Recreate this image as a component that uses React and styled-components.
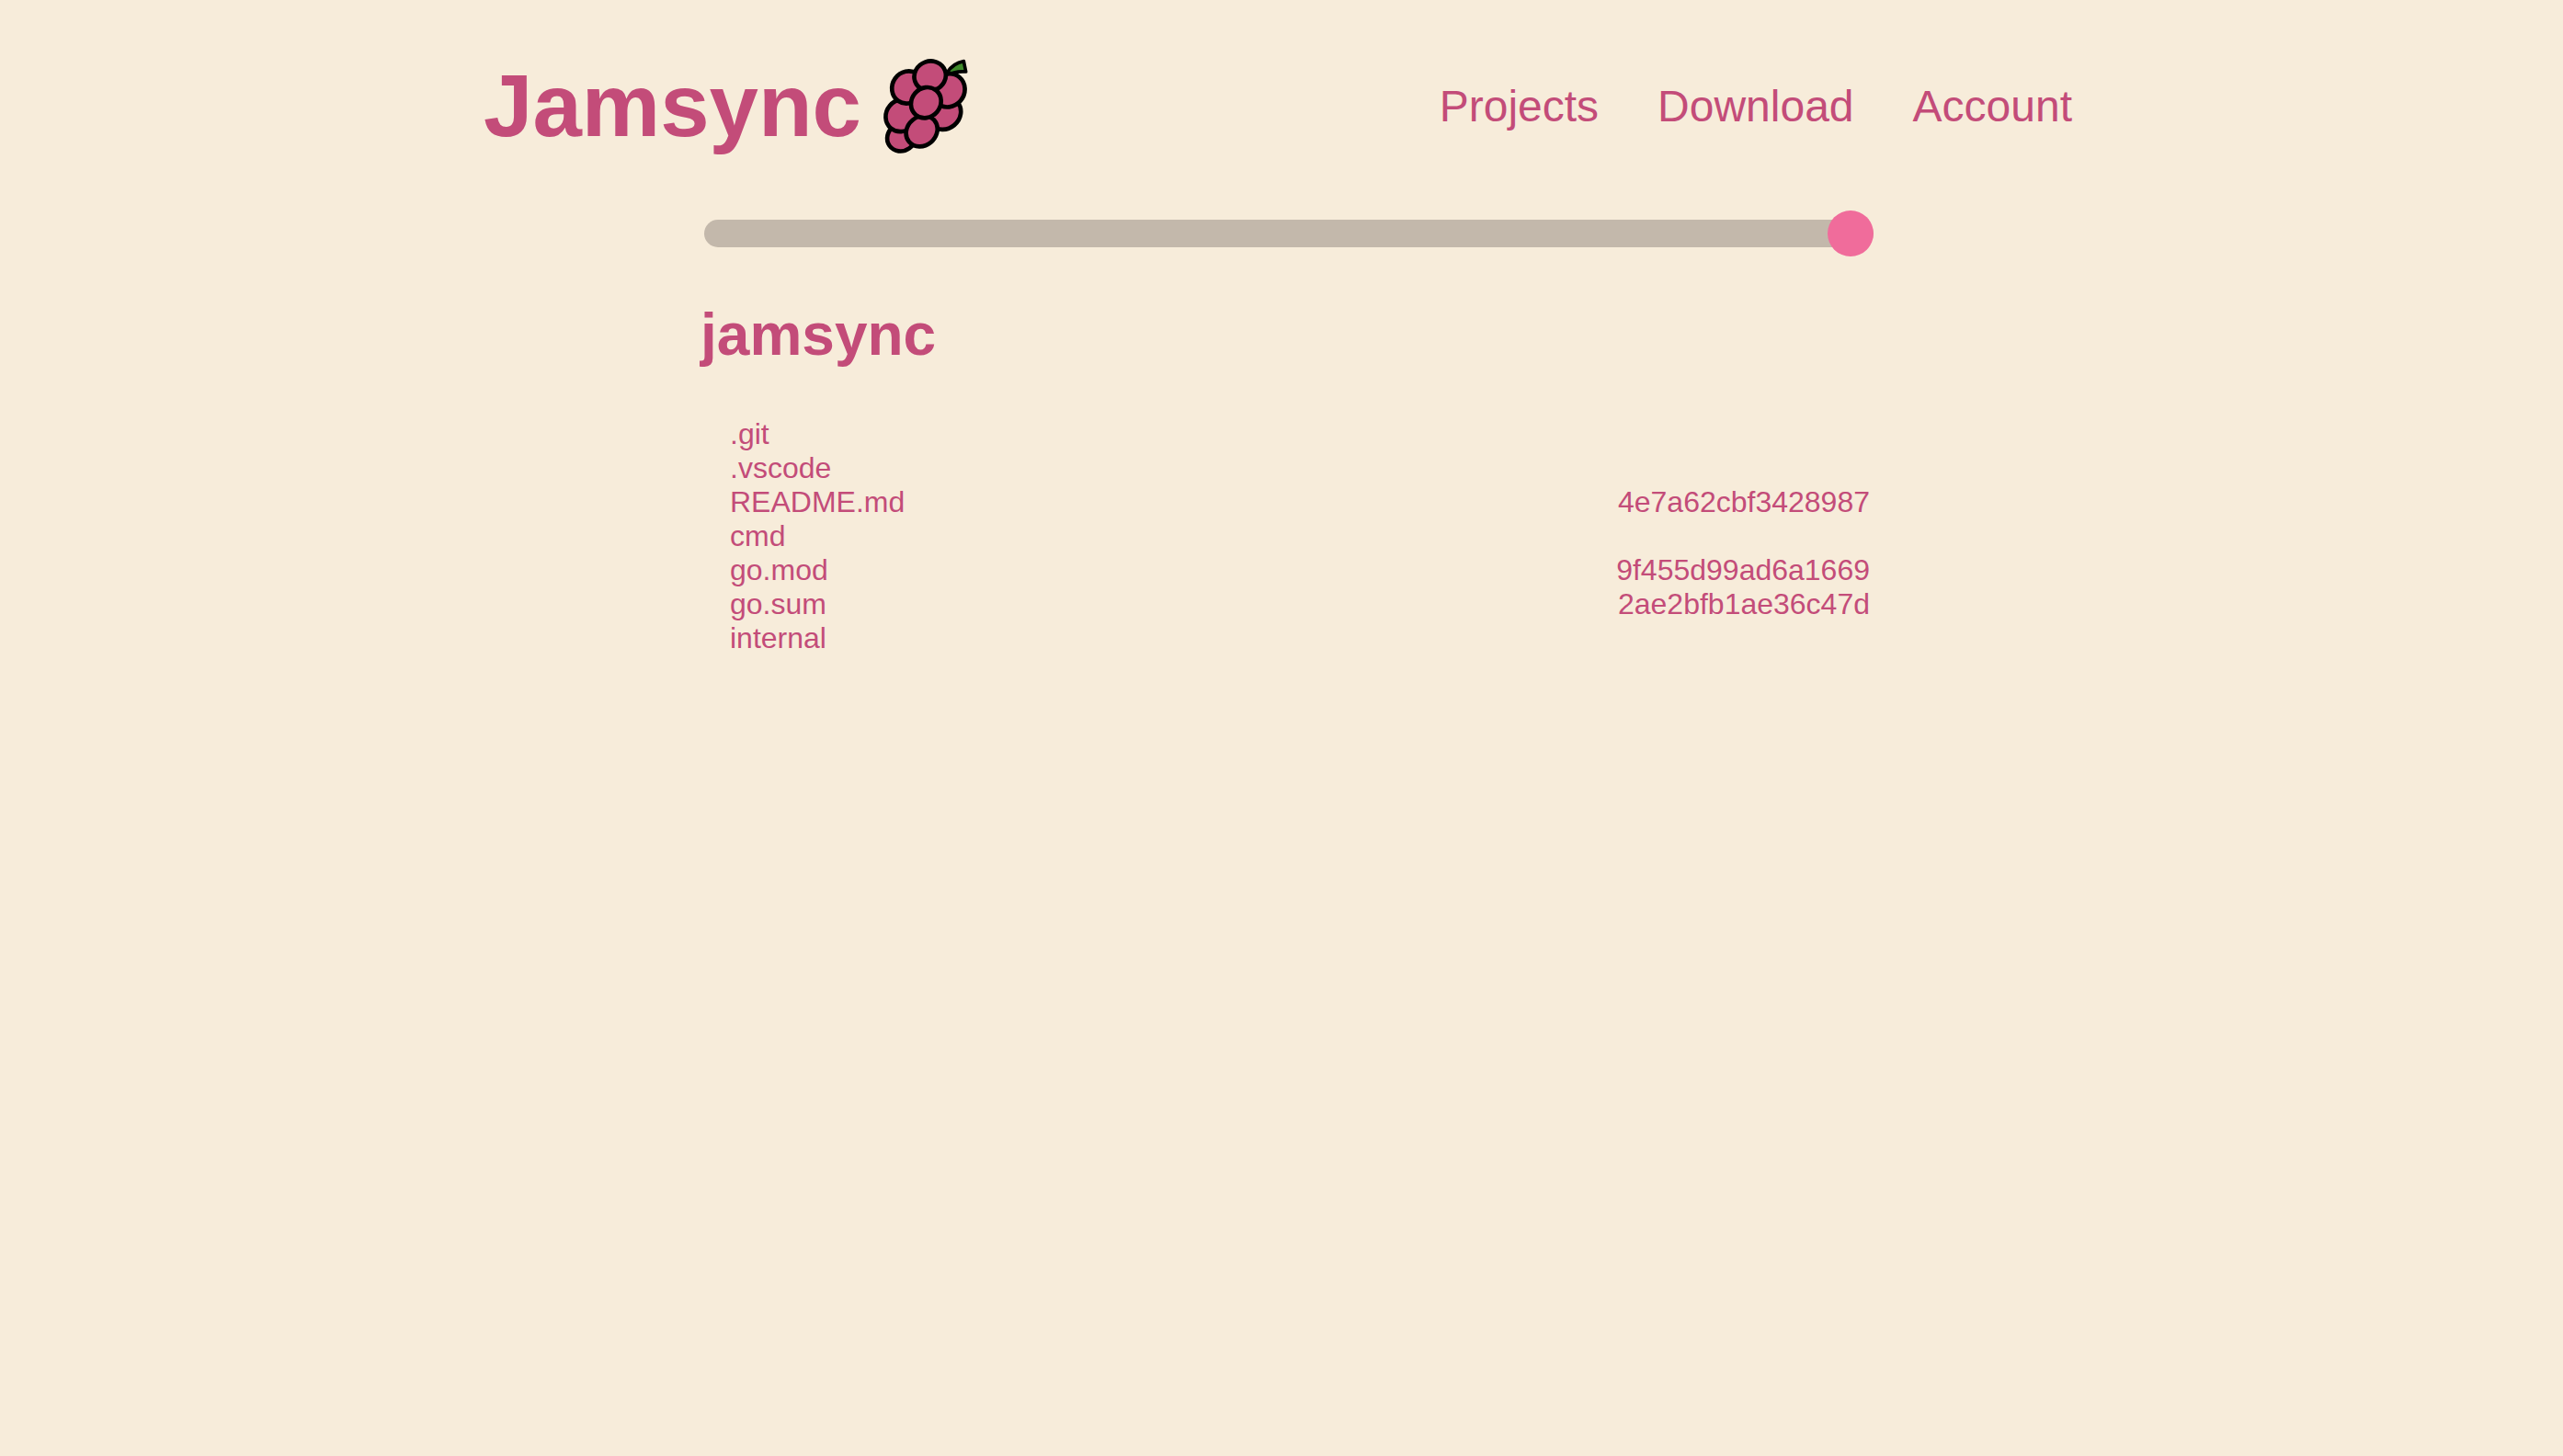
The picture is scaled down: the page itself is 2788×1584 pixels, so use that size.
import React from 'react'
import styled, { createGlobalStyle } from 'styled-components'

const GlobalStyle = createGlobalStyle`
  html, body {
    margin: 0;
    padding: 0;
    background: #f7ecda;
    color: #c34c79;
    font-family: "Liberation Sans", Arial, sans-serif;
  }
`

const Page = styled.div`
  min-height: 1584px;
  padding: 50px 534px 0 526px;
  box-sizing: border-box;
`

const Header = styled.header`
  display: flex;
  justify-content: space-between;
  align-items: center;
  height: 130px;
`

const Brand = styled.div`
  display: flex;
  align-items: center;
`

const Logo = styled.h1`
  margin: 0;
  font-size: 96px;
  line-height: 110px;
  font-weight: 700;
`

const Grapes = styled.svg`
  width: 140px;
  height: 130px;
  margin-left: 3px;
`

const Nav = styled.nav`
  display: flex;
  gap: 64px;
`

const NavLink = styled.a`
  font-size: 48px;
  line-height: 55px;
  color: #c34c79;
  text-decoration: none;
`

const Content = styled.main`
  width: 1272px;
  margin: 49px 0 0 240px;
`

const Timeline = styled.input`
  display: block;
  width: 100%;
  height: 50px;
  margin: 0;
  appearance: none;
  background: transparent;

  &::-webkit-slider-runnable-track {
    height: 30px;
    border-radius: 15px;
    background: #c3b8ab;
  }

  &::-webkit-slider-thumb {
    appearance: none;
    width: 50px;
    height: 50px;
    margin-top: -10px;
    border-radius: 50%;
    background: #f06c9b;
  }
`

const ProjectName = styled.h2`
  margin: 48px 0 0 -4px;
  font-size: 64px;
  line-height: 74px;
  font-weight: 700;
`

const FileList = styled.ul`
  list-style: none;
  margin: 53px 0 0;
  padding: 0 4px 0 28px;
`

const FileRow = styled.li`
  display: flex;
  justify-content: space-between;
  font-size: 32px;
  line-height: 37px;
`

const files = [
  { name: '.git' },
  { name: '.vscode' },
  { name: 'README.md', hash: '4e7a62cbf3428987' },
  { name: 'cmd' },
  { name: 'go.mod', hash: '9f455d99ad6a1669' },
  { name: 'go.sum', hash: '2ae2bfb1ae36c47d' },
  { name: 'internal' },
]

// cx, cy, rx, ry, rotation, back to front
const berries = [
  [122, 298, 48, 44, -35],
  [122, 227, 54, 50, -50],
  [262, 220, 56, 50, -40],
  [275, 145, 56, 52, -50],
  [142, 135, 54, 50, -55],
  [215, 98, 52, 48, -20],
  [188, 278, 54, 47, -40],
  [202, 185, 52, 47, -50],
]

const GrapesIcon = () => (
  <Grapes viewBox="0 0 420 390">
    <path
      d="M268 90 C282 68 300 54 325 50 L332 84 C310 82 288 86 268 98 Z"
      fill="#3f8a2b"
      stroke="#000"
      strokeWidth="11"
      strokeLinejoin="round"
    />
    {berries.map(([cx, cy, rx, ry, rot], index) => (
      <ellipse
        key={index}
        cx={cx}
        cy={cy}
        rx={rx}
        ry={ry}
        transform={`rotate(${rot} ${cx} ${cy})`}
        fill="#c34c79"
        stroke="#000"
        strokeWidth="14"
      />
    ))}
  </Grapes>
)

const App = () => (
  <Page>
    <GlobalStyle />
    <Header>
      <Brand>
        <Logo>Jamsync</Logo>
        <GrapesIcon />
      </Brand>
      <Nav>
        <NavLink href="#">Projects</NavLink>
        <NavLink href="#">Download</NavLink>
        <NavLink href="#">Account</NavLink>
      </Nav>
    </Header>
    <Content>
      <Timeline type="range" min="0" max="100" defaultValue="100" />
      <ProjectName>jamsync</ProjectName>
      <FileList>
        {files.map((file) => (
          <FileRow key={file.name}>
            <span>{file.name}</span>
            {file.hash && <span>{file.hash}</span>}
          </FileRow>
        ))}
      </FileList>
    </Content>
  </Page>
)

export default App
